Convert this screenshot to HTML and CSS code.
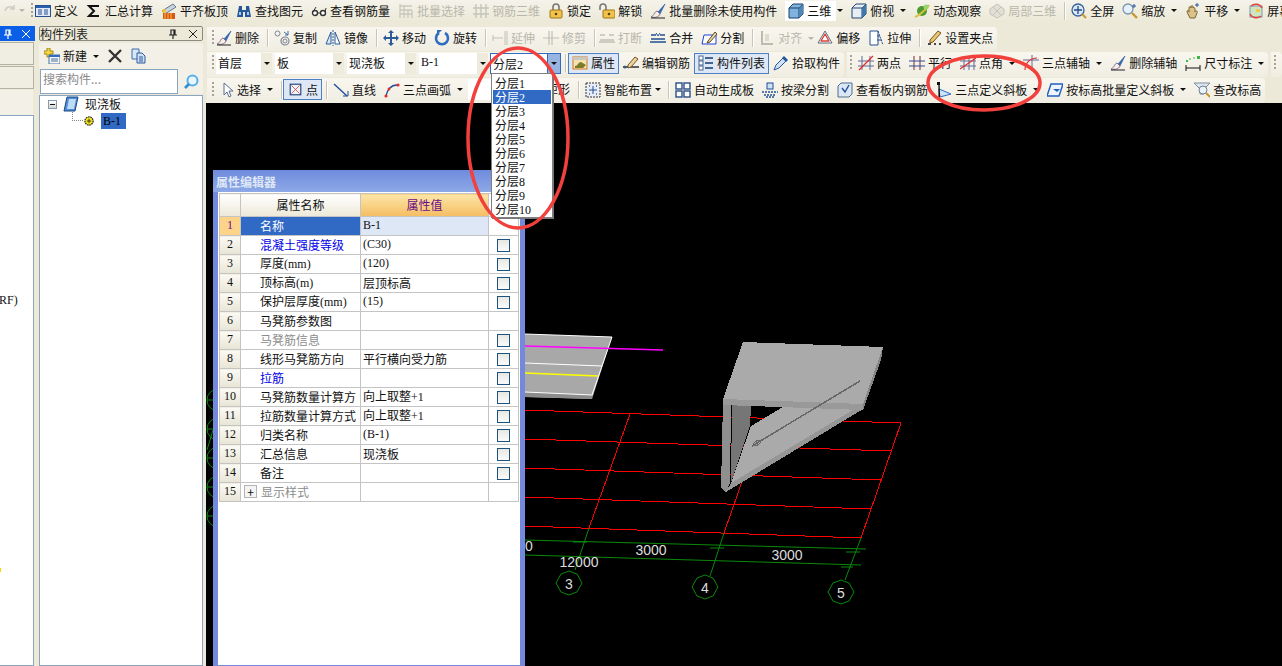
FILE: index.html
```html
<!DOCTYPE html>
<html lang="zh-CN">
<head>
<meta charset="utf-8">
<title>构件列表</title>
<link rel="stylesheet" href="styles.css">
</head>
<body>
<svg class="defs" width="0" height="0" aria-hidden="true">
  <symbol id="i-define" viewBox="0 0 16 16"><rect x=".5" y="2.5" width="15" height="11" fill="#dfe9f7" stroke="#2a4f8f"/><rect x="1" y="3" width="14" height="2" fill="#2a5fb0"/><path d="M3 7h4M3 9h4M3 11h4M9 7h4M9 9h4M9 11h4" stroke="#2a4f8f"/></symbol>
  <symbol id="i-sigma" viewBox="0 0 16 16"><path d="M12 4V3H3l5 5-5 5h9v-1" fill="none" stroke="#111" stroke-width="2"/></symbol>
  <symbol id="i-align" viewBox="0 0 16 16"><path d="M1 8l11-7 3 3L4 11z" fill="#c9d4e0" stroke="#66788c"/><rect x="2" y="10" width="12" height="6" fill="#d8561c"/><path d="M4 10v6M7 10v6M10 10v6" stroke="#f3c23c"/><circle cx="3" cy="8" r="2" fill="#f3c23c"/></symbol>
  <symbol id="i-binoc" viewBox="0 0 16 16"><path d="M3 3h3v4h4V3h3l2 11H9V9H7v5H1z" fill="#27579b"/><path d="M3 9h2v3H3zM11 9h2v3h-2z" fill="#a9c8ee"/></symbol>
  <symbol id="i-glass" viewBox="0 0 16 16"><circle cx="4" cy="10" r="2.5" fill="#fff" stroke="#333" stroke-width="1.4"/><circle cx="12" cy="10" r="2.5" fill="#fff" stroke="#333" stroke-width="1.4"/><path d="M6.5 10h3M2 9l3-5M14 9l1-4" stroke="#333" fill="none"/></symbol>
  <symbol id="i-batch" viewBox="0 0 16 16"><path d="M2 1v14M2 3h12M2 7h12M2 11h12M6 3v12M10 7v8M14 7v8" stroke="#c9c7bd" fill="none" stroke-width="1.3"/></symbol>
  <symbol id="i-rebar" viewBox="0 0 16 16"><path d="M3 1v14M8 1v14M13 1v14M0 5h16M0 11h16" stroke="#c4c3b9" fill="none" stroke-width="1.3"/></symbol>
  <symbol id="i-lock" viewBox="0 0 16 16"><path d="M5 7V4a3 3 0 016 0v3" fill="none" stroke="#777" stroke-width="1.6"/><rect x="2" y="7" width="12" height="8" rx="1" fill="#f2c24a" stroke="#9a7416"/><circle cx="8" cy="11" r="1.3" fill="#5a4208"/></symbol>
  <symbol id="i-unlock" viewBox="0 0 16 16"><path d="M1 7V4a3 3 0 016 0v3" fill="none" stroke="#777" stroke-width="1.6"/><rect x="4" y="7" width="12" height="8" rx="1" fill="#f2c24a" stroke="#9a7416"/><circle cx="10" cy="11" r="1.3" fill="#5a4208"/></symbol>
  <symbol id="i-brush" viewBox="0 0 16 16"><path d="M15 1L8 9l2 2z" fill="#2f6dc2" stroke="#1d4780" stroke-width=".5"/><path d="M7 8c-3 1-2 4-6 6 4 1 8 0 9-3z" fill="#f3efe6" stroke="#8c6a8c"/><path d="M1 15h14" stroke="#222"/></symbol>
  <symbol id="i-cube" viewBox="0 0 16 16"><path d="M1 5l4-4h10v10l-4 4H1z" fill="#7fb2de" stroke="#1d3f66"/><path d="M1 5h10v10M11 5l4-4" fill="none" stroke="#1d3f66"/><path d="M11 5l4-4v10l-4 4z" fill="#4f86b8"/></symbol>
  <symbol id="i-cube2" viewBox="0 0 16 16"><path d="M1 5l4-4h10v10l-4 4H1z" fill="#e7eef6" stroke="#23466e"/><path d="M1 5h10v10M11 5l4-4" fill="none" stroke="#23466e"/><path d="M11 5l4-4v10l-4 4z" fill="#3f78ad"/></symbol>
  <symbol id="i-orbit" viewBox="0 0 16 16"><circle cx="8" cy="8" r="5" fill="#4d9a35"/><path d="M1 14C4 13 12 7 15 2" stroke="#d8c23c" stroke-width="2" fill="none"/><circle cx="12" cy="4" r="2.5" fill="#9bd46a"/></symbol>
  <symbol id="i-local" viewBox="0 0 16 16"><path d="M8 1l7 5v5l-7 4-7-4V6z" fill="#e2e0d6" stroke="#c6c4b9"/><path d="M4 4l8 8M12 4l-8 8" stroke="#c6c4b9"/></symbol>
  <symbol id="i-full" viewBox="0 0 16 16"><circle cx="7" cy="7" r="6" fill="#dce8f7" stroke="#3a6296" stroke-width="1.3"/><path d="M7 3v8M3 7h8" stroke="#1f4b8a" stroke-width="1.3"/><path d="M11 11l4 4" stroke="#c9962d" stroke-width="2"/></symbol>
  <symbol id="i-zoom" viewBox="0 0 16 16"><circle cx="6" cy="6" r="5" fill="#e4f0fb" stroke="#7d95aa" stroke-width="1.3"/><path d="M10 10l5 5" stroke="#c9962d" stroke-width="2.4"/><path d="M12 1v4M10 3h4" stroke="#27579b"/></symbol>
  <symbol id="i-pan" viewBox="0 0 16 16"><path d="M2 9c0-3 2-1 2 0V5c0-2 2-2 2 0V4c0-2 2-2 2 0v1c0-1 2-1 2 1v3c1-2 3-1 2 1l-2 5H5z" fill="#dcc28a" stroke="#7a6433"/><path d="M12 0v4M10 2h4" stroke="#27579b"/></symbol>
  <symbol id="i-screen" viewBox="0 0 16 16"><rect x="2" y="3" width="12" height="11" fill="#cfe4c0" stroke="#7c98b4"/><path d="M3 3a7 7 0 0111 2M13 13a7 7 0 01-11-2" fill="none" stroke="#e0443a" stroke-width="1.5"/><rect x="8" y="6" width="4" height="3" fill="#f0c94a"/></symbol>
  <symbol id="i-copy" viewBox="0 0 16 16"><circle cx="3.5" cy="3.5" r="2.5" fill="none" stroke="#7e8794"/><circle cx="11" cy="11" r="4" fill="none" stroke="#7e8794" stroke-width="1.2"/><circle cx="11" cy="11" r="2" fill="none" stroke="#7e8794"/><path d="M10 2l4 3M14 1v4h-3" stroke="#3b6ca8" fill="none"/></symbol>
  <symbol id="i-mirror" viewBox="0 0 16 16"><path d="M6 2L1 14h5z" fill="#dce8f7" stroke="#2a5c9a"/><path d="M10 2l5 12h-5z" fill="#fff" stroke="#2a5c9a"/><path d="M8 0v16" stroke="#2a5c9a" stroke-dasharray="2 1"/></symbol>
  <symbol id="i-move" viewBox="0 0 16 16"><path d="M8 0l3 3H9v4h4V5l3 3-3 3V9H9v4h2l-3 3-3-3h2V9H3v2L0 8l3-3v2h4V3H5z" fill="#2a5c9a"/></symbol>
  <symbol id="i-rotate" viewBox="0 0 16 16"><path d="M11 3a6 6 0 11-6 0" fill="none" stroke="#2f6dc2" stroke-width="2.6"/><path d="M8 0h-5v5z" fill="#2f6dc2"/></symbol>
  <symbol id="i-extend" viewBox="0 0 16 16"><path d="M13 1v14M15 1v14M1 8h10M1 5v6" stroke="#c2c0b5" fill="none"/></symbol>
  <symbol id="i-trim" viewBox="0 0 16 16"><path d="M6 1v14M9 1v14M0 8h16" stroke="#c2c0b5" fill="none" stroke-width="1.2"/></symbol>
  <symbol id="i-break" viewBox="0 0 16 16"><path d="M1 5h5M10 5h5M0 12h16M1 10h14" stroke="#c2c0b5" fill="none" stroke-width="1.5"/></symbol>
  <symbol id="i-merge" viewBox="0 0 16 16"><path d="M1 5h5M10 5h5M0 12h16M1 9h14" stroke="#23508f" fill="none" stroke-width="1.5"/><path d="M6 3l2 3 2-3" stroke="#23508f" fill="none"/></symbol>
  <symbol id="i-split" viewBox="0 0 16 16"><path d="M3 5h12v9H1z" fill="#fff" stroke="#1f3fd0"/><path d="M7 11l7-9 2 2-7 8-3 1z" fill="#e6d9a6" stroke="#5c4a22"/></symbol>
  <symbol id="i-align2" viewBox="0 0 16 16"><path d="M3 1v14M3 14h11" stroke="#bdbbb0" stroke-width="2"/><rect x="6" y="4" width="4" height="7" fill="#dddbd0"/></symbol>
  <symbol id="i-offset" viewBox="0 0 16 16"><path d="M8 1l7 12H1z" fill="#fff" stroke="#5d6c80" stroke-linejoin="round"/><path d="M8 4l4 7H4z" fill="none" stroke="#d8453a" stroke-linejoin="round" stroke-width="1.4"/></symbol>
  <symbol id="i-stretch" viewBox="0 0 16 16"><path d="M2 1h8v14H2z" fill="#fff" stroke="#2a4f8f"/><path d="M10 1l5 14" stroke="#2a4f8f" stroke-dasharray="2 1"/><path d="M9 6h3M9 10h5" stroke="#2a4f8f"/></symbol>
  <symbol id="i-grip" viewBox="0 0 16 16"><path d="M2 14h3M8 14h2M13 14h2" stroke="#111" stroke-width="1.6"/><path d="M4 10l8-9 3 2-8 9-3 1z" fill="#e7c86e" stroke="#7e4f1b"/></symbol>
  <symbol id="i-attr" viewBox="0 0 16 16"><rect x="1" y="2" width="14" height="12" fill="#f4e3b0" stroke="#d17a1e"/><path d="M1 2h14v3H1z" fill="#c9c7be"/><path d="M3 11c3 0 3-4 6-4l5 3-3 3H3z" fill="#7b7b2a"/></symbol>
  <symbol id="i-edit" viewBox="0 0 16 16"><path d="M0 12h16" stroke="#222" stroke-width="1.4"/><path d="M5 10l7-8 3 2-7 8-3 1z" fill="#e7d7a3" stroke="#7e4f1b"/><circle cx="2" cy="12" r="1.5" fill="#3b5a92"/></symbol>
  <symbol id="i-list" viewBox="0 0 16 16"><rect x="1" y="1" width="4" height="4" fill="#fff" stroke="#47668f"/><rect x="1" y="6" width="4" height="4" fill="#fff" stroke="#47668f"/><rect x="1" y="11" width="4" height="4" fill="#fff" stroke="#47668f"/><path d="M7 3h8M7 8h8M7 13h8" stroke="#47668f" stroke-width="2"/></symbol>
  <symbol id="i-pick" viewBox="0 0 16 16"><path d="M1 15l2-5 7-7 3 3-7 7z" fill="#cfe2f6" stroke="#27579b"/><path d="M9 3l2-2 4 4-2 2z" fill="#27579b"/></symbol>
  <symbol id="i-twopt" viewBox="0 0 16 16"><path d="M4 1v14M12 1v14M0 6h16M0 11h16" stroke="#5d6b96"/><path d="M1 15L15 1" stroke="#e32c2c" stroke-width="1.2"/></symbol>
  <symbol id="i-par" viewBox="0 0 16 16"><path d="M5 1v14M11 1v14" stroke="#7b2c2c"/><path d="M0 6h16M0 11h16" stroke="#2f4f9e"/></symbol>
  <symbol id="i-angle" viewBox="0 0 16 16"><path d="M4 1v14M9 1v14M14 1v14M0 6h16M0 11h16" stroke="#5d6b96"/><path d="M0 14L16 3" stroke="#e32c2c" stroke-width="1.2"/></symbol>
  <symbol id="i-arc3" viewBox="0 0 16 16"><path d="M9 0v16M0 5h16" stroke="#5d6b96"/><path d="M2 15C2 8 7 3 14 3" stroke="#e32c2c" fill="none" stroke-width="1.2"/></symbol>
  <symbol id="i-dim" viewBox="0 0 16 16"><path d="M1 10v6M15 10v6M1 13h14" stroke="#111"/><rect x="1" y="5" width="2" height="2" fill="#3bb54a"/><rect x="12" y="1" width="3" height="3" fill="#3bb54a"/><path d="M4 4h2M8 3h2" stroke="#3bb54a"/></symbol>
  <symbol id="i-cursor" viewBox="0 0 16 16"><path d="M4 1v12l3-3 2 5 2-1-2-5h4z" fill="#fff" stroke="#5b6f96"/></symbol>
  <symbol id="i-point" viewBox="0 0 16 16"><rect x="1.500" y="1.500" width="13" height="13" fill="#eef3fa" stroke="#21437a" stroke-width="1.400"/><path d="M3 3l10 10M13 3L3 13" stroke="#d8453a"/></symbol>
  <symbol id="i-line" viewBox="0 0 16 16"><path d="M1 2l13 12" stroke="#234f9a" stroke-width="1.4"/><path d="M10 14h5V9" fill="none" stroke="#234f9a"/></symbol>
  <symbol id="i-arc" viewBox="0 0 16 16"><path d="M2 14C3 8 7 3 13 3" stroke="#234f9a" fill="none" stroke-width="1.4"/><circle cx="2" cy="14" r="1.6" fill="#e32c2c"/><circle cx="5" cy="7" r="1.4" fill="#e32c2c"/><circle cx="14" cy="3" r="1.6" fill="#e32c2c"/></symbol>
  <symbol id="i-smart" viewBox="0 0 16 16"><rect x="1" y="1" width="14" height="14" fill="#e6edf6" stroke="#333" stroke-dasharray="2 1"/><path d="M8 4v8M4 8h8" stroke="#234f9a"/><path d="M4 4h1M11 4h1M4 12h1M11 12h1" stroke="#111"/></symbol>
  <symbol id="i-auto" viewBox="0 0 16 16"><rect x="1" y="1" width="6" height="6" fill="#fff" stroke="#2b4f86" stroke-width="1.4"/><rect x="9" y="1" width="6" height="6" fill="#fff" stroke="#2b4f86" stroke-width="1.4"/><rect x="1" y="9" width="6" height="6" fill="#fff" stroke="#2b4f86" stroke-width="1.4"/><rect x="9" y="9" width="6" height="6" fill="#fff" stroke="#2b4f86" stroke-width="1.4"/></symbol>
  <symbol id="i-beam" viewBox="0 0 16 16"><rect x="5" y="1" width="6" height="6" fill="#cfe2f6" stroke="#234f9a"/><path d="M0 10h16M2 13h12M4 15h8" stroke="#234f9a" stroke-dasharray="2 1" stroke-width="1.3"/></symbol>
  <symbol id="i-view" viewBox="0 0 16 16"><path d="M4 1h11v11l-3 3H1V4z" fill="#dbe7f4" stroke="#4e6d92"/><path d="M5 6l3 4 4-7" fill="none" stroke="#234f9a" stroke-width="1.4"/></symbol>
  <symbol id="i-tri" viewBox="0 0 16 16"><path d="M3 7l1 8 11-3z" fill="#cfe2f6" stroke="#2f6dc2"/><path d="M3 1v14h1" stroke="#111" stroke-width="1.2"/><rect x="1" y="0" width="3" height="3" fill="#111"/></symbol>
  <symbol id="i-slope" viewBox="0 0 16 16"><path d="M4 2h12l-4 12H0z" fill="#eef5fd" stroke="#1f5fc0" stroke-width="1.4"/><path d="M6 7l4 3 3-3z" fill="#1f5fc0"/></symbol>
  <symbol id="i-query" viewBox="0 0 16 16"><path d="M0 1h16l-6 6v5H6V7z" fill="#dfe6ee" stroke="#7e8ea1"/><circle cx="9" cy="8" r="4" fill="#e8f2fb" stroke="#6e8296"/><path d="M12 11l4 4" stroke="#c9962d" stroke-width="2"/></symbol>
  <symbol id="i-new" viewBox="0 0 16 16"><path d="M3 0h3v3h3v3H6v3H3V6H0V3h3z" fill="#f5d642" stroke="#a38815"/><rect x="5" y="7" width="11" height="9" fill="#f4f7fb" stroke="#4c6d99"/><path d="M5 7h11v2H5z" fill="#2f6dc2"/><path d="M7 11h7M7 13h7" stroke="#4c6d99"/></symbol>
  <symbol id="i-x" viewBox="0 0 16 16"><path d="M2 2l12 12M14 2L2 14" stroke="#333" stroke-width="2.4"/></symbol>
  <symbol id="i-docs" viewBox="0 0 16 16"><path d="M1 1h7v10H1z" fill="#dbe7f7" stroke="#3b6ca8"/><path d="M6 5h5l3 3v7H6z" fill="#cfe0f6" stroke="#2a5c9a"/><path d="M8 9h4M8 11h4M8 13h4" stroke="#2a5c9a"/></symbol>
  <symbol id="i-search" viewBox="0 0 16 16"><circle cx="9.500" cy="6.500" r="5" fill="#eaf6fe" stroke="#55b0e8" stroke-width="2"/><path d="M6 10l-4 4" stroke="#2f8ed4" stroke-width="2.600"/></symbol>
  <symbol id="i-book" viewBox="0 0 16 16"><path d="M4 1h11l-3 14H1z" fill="#4e8fd8" stroke="#1d4780"/><path d="M6 3h7l-2 10H4z" fill="#bcdcf8"/></symbol>
  <symbol id="i-gear" viewBox="0 0 16 16"><circle cx="8" cy="8" r="5.500" fill="#f2e323" stroke="#111" stroke-dasharray="2 1" stroke-width="1.500"/><path d="M5 8h6M8 5v6" stroke="#111"/></symbol>
  <symbol id="i-pin" viewBox="0 0 10 10"><path d="M3 1h4v5H3zM1 6h8M5 6v4M6 1v5" fill="none" stroke="currentColor" stroke-width="1.200"/></symbol>
  <symbol id="i-close" viewBox="0 0 10 10"><path d="M1 1l8 8M9 1L1 9" stroke="currentColor"/></symbol>
  <symbol id="i-undo" viewBox="0 0 16 16"><path d="M3 8a5 5 0 019-2M12 2v4H8" fill="none" stroke="#cfcdc3" stroke-width="1.500"/></symbol>
</svg>

<div class="app">
  <header class="topbar">
    <div class="quick"><svg class="ico"><use href="#i-undo"/></svg><span class="arr off"></span></div>
    <span class="grip"></span>
    <div class="tools">
      <div class="tool"><svg class="ico"><use href="#i-define"/></svg>定义</div>
      <div class="tool"><svg class="ico"><use href="#i-sigma"/></svg>汇总计算</div>
      <div class="tool"><svg class="ico"><use href="#i-align"/></svg>平齐板顶</div>
      <div class="tool"><svg class="ico"><use href="#i-binoc"/></svg>查找图元</div>
      <div class="tool"><svg class="ico"><use href="#i-glass"/></svg>查看钢筋量</div>
      <div class="tool off"><svg class="ico"><use href="#i-batch"/></svg>批量选择</div>
      <div class="tool off"><svg class="ico"><use href="#i-rebar"/></svg>钢筋三维</div>
      <div class="tool"><svg class="ico"><use href="#i-lock"/></svg>锁定</div>
      <div class="tool"><svg class="ico"><use href="#i-unlock"/></svg>解锁</div>
      <div class="tool"><svg class="ico"><use href="#i-brush"/></svg>批量删除未使用构件</div>
      <div class="tool boxed"><svg class="ico"><use href="#i-cube"/></svg>三维<span class="arr"></span></div>
      <div class="tool"><svg class="ico"><use href="#i-cube2"/></svg>俯视<span class="arr"></span></div>
      <div class="tool"><svg class="ico"><use href="#i-orbit"/></svg>动态观察</div>
      <div class="tool off"><svg class="ico"><use href="#i-local"/></svg>局部三维</div>
      <span class="sep"></span>
      <div class="tool"><svg class="ico"><use href="#i-full"/></svg>全屏</div>
      <div class="tool"><svg class="ico"><use href="#i-zoom"/></svg>缩放<span class="arr"></span></div>
      <div class="tool"><svg class="ico"><use href="#i-pan"/></svg>平移<span class="arr"></span></div>
      <div class="tool"><svg class="ico"><use href="#i-screen"/></svg>屏幕</div>
    </div>
  </header>

  <div class="workspace">
    <aside class="dock">
      <div class="dock-title"><svg class="mini"><use href="#i-pin"/></svg><svg class="mini"><use href="#i-close"/></svg></div>
      <div class="dock-btn"></div>
      <div class="dock-btn"></div>
      <div class="dock-strip"></div>
      <div class="dock-body"><span class="clip lat">(RF)</span><span class="mark"></span></div>
    </aside>

    <aside class="panel">
      <div class="panel-title"><span>构件列表</span><svg class="mini"><use href="#i-pin"/></svg><svg class="mini"><use href="#i-close"/></svg></div>
      <div class="panel-tools">
        <div class="tool"><svg class="ico"><use href="#i-new"/></svg>新建<span class="arr"></span></div>
        <svg class="ico"><use href="#i-x"/></svg>
        <svg class="ico"><use href="#i-docs"/></svg>
      </div>
      <div class="search">
        <div class="search-input">搜索构件...</div>
        <div class="search-btn"><svg class="ico"><use href="#i-search"/></svg></div>
      </div>
      <div class="tree">
        <div class="tree-root"><span class="expander"></span><svg class="ico"><use href="#i-book"/></svg>现浇板</div>
        <div class="tree-leaf"><span class="dots"></span><svg class="ico small"><use href="#i-gear"/></svg><span class="leaf-label lat">B-1</span></div>
      </div>
    </aside>

    <main class="main">
      <div class="row row2">
        <div class="bar">
          <span class="grip"></span>
          <div class="tool"><svg class="ico"><use href="#i-brush"/></svg>删除</div>
          <span class="sep"></span>
          <div class="tool"><svg class="ico"><use href="#i-copy"/></svg>复制</div>
          <div class="tool"><svg class="ico"><use href="#i-mirror"/></svg>镜像</div>
          <span class="sep"></span>
          <div class="tool"><svg class="ico"><use href="#i-move"/></svg>移动</div>
          <div class="tool"><svg class="ico"><use href="#i-rotate"/></svg>旋转</div>
          <span class="sep"></span>
          <div class="tool off"><svg class="ico"><use href="#i-extend"/></svg>延伸</div>
          <div class="tool off"><svg class="ico"><use href="#i-trim"/></svg>修剪</div>
          <span class="sep"></span>
          <div class="tool off tight"><svg class="ico"><use href="#i-break"/></svg>打断</div>
          <div class="tool"><svg class="ico"><use href="#i-merge"/></svg>合并</div>
          <div class="tool"><svg class="ico"><use href="#i-split"/></svg>分割</div>
          <span class="sep"></span>
          <div class="tool off"><svg class="ico"><use href="#i-align2"/></svg>对齐<span class="arr off near"></span></div>
          <div class="tool"><svg class="ico"><use href="#i-offset"/></svg>偏移</div>
          <div class="tool"><svg class="ico"><use href="#i-stretch"/></svg>拉伸</div>
          <span class="sep"></span>
          <div class="tool"><svg class="ico"><use href="#i-grip"/></svg>设置夹点</div>
        </div>
      </div>

      <div class="row row3">
        <div class="bar bar-a">
          <span class="grip"></span>
          <div class="combo c-floor"><span class="combo-text">首层</span><span class="combo-btn"><span class="arr"></span></span></div>
          <div class="combo c-mid"><span class="combo-text">板</span><span class="combo-btn"><span class="arr"></span></span></div>
          <div class="combo c-mid"><span class="combo-text">现浇板</span><span class="combo-btn"><span class="arr"></span></span></div>
          <div class="combo c-mid"><span class="combo-text lat">B-1</span><span class="combo-btn"><span class="arr"></span></span></div>
          <div class="combo c-open"><span class="combo-text">分层<span class="lat">2</span></span><span class="combo-btn"><span class="arr"></span></span></div>
          <span class="sep"></span>
          <div class="tool boxed-blue"><svg class="ico"><use href="#i-attr"/></svg>属性</div>
          <div class="tool"><svg class="ico"><use href="#i-edit"/></svg>编辑钢筋</div>
          <div class="tool boxed-blue"><svg class="ico"><use href="#i-list"/></svg>构件列表</div>
          <div class="tool"><svg class="ico"><use href="#i-pick"/></svg>拾取构件</div>
        </div>
        <div class="bar bar-b">
          <span class="grip"></span>
          <div class="tool"><svg class="ico"><use href="#i-twopt"/></svg>两点</div>
          <div class="tool"><svg class="ico"><use href="#i-par"/></svg>平行</div>
          <div class="tool"><svg class="ico"><use href="#i-angle"/></svg>点角<span class="arr"></span></div>
          <div class="tool"><svg class="ico"><use href="#i-arc3"/></svg>三点辅轴<span class="arr"></span></div>
          <div class="tool"><svg class="ico"><use href="#i-brush"/></svg>删除辅轴</div>
          <div class="tool"><svg class="ico"><use href="#i-dim"/></svg>尺寸标注<span class="arr"></span></div>
        </div>
        <div class="bar bar-c"><span class="grip"></span></div>
      </div>

      <div class="row row4">
        <div class="bar">
          <span class="grip"></span>
          <div class="tool select"><svg class="ico"><use href="#i-cursor"/></svg>选择<span class="arr"></span></div>
          <span class="sep"></span>
          <div class="tool boxed-blue point"><svg class="ico"><use href="#i-point"/></svg>点</div>
          <span class="sep"></span>
          <div class="tool"><svg class="ico"><use href="#i-line"/></svg>直线</div>
          <div class="tool"><svg class="ico"><use href="#i-arc"/></svg>三点画弧<span class="arr"></span></div>
          <div class="rect-field">矩形</div>
          <span class="sep"></span>
          <div class="tool"><svg class="ico"><use href="#i-smart"/></svg>智能布置<span class="arr near2"></span></div>
          <span class="sep"></span>
          <div class="tool"><svg class="ico"><use href="#i-auto"/></svg>自动生成板</div>
          <div class="tool"><svg class="ico"><use href="#i-beam"/></svg>按梁分割</div>
          <div class="tool"><svg class="ico"><use href="#i-view"/></svg>查看板内钢筋</div>
          <div class="tool"><svg class="ico"><use href="#i-tri"/></svg>三点定义斜板<span class="arr"></span></div>
          <div class="tool"><svg class="ico"><use href="#i-slope"/></svg>按标高批量定义斜板<span class="arr"></span></div>
          <div class="tool"><svg class="ico"><use href="#i-query"/></svg>查改标高</div>
        </div>
      </div>

      <div class="canvas">
        <svg class="scene" viewBox="206 103 1076 563" width="1076" height="563">
          <g fill="none" stroke="#0a8a0a">
            <circle cx="218" cy="400" r="11"/><circle cx="218" cy="429" r="11"/><circle cx="218" cy="458" r="11"/><circle cx="218" cy="487" r="11"/><circle cx="218" cy="516" r="11"/>
            <path d="M207 400h8M207 429h8M207 458h8M207 487h8M207 516h8M207 450l6-20"/>
          </g>
          <path d="M525 334L612 337L592 399L525 397Z" fill="#a8a8a8"/>
          <path d="M525 397L592 399L592 395L525 392Z" fill="#8c8c8c"/>
          <g fill="none" stroke="#fff">
            <path d="M525 334L612 337L592 395L525 392M525 363L602 366"/>
          </g>
          <path d="M525 346L663 350" stroke="#f0f" stroke-width="1.500"/>
          <path d="M525 373L598 376" stroke="#ff0" stroke-width="1.500"/>
          <g class="crisp" fill="none" stroke="#f00">
            <path d="M525 410L901 423M525 439L891 451M525 468L881 480M525 497L871 509M525 526L861 538"/>
            <path d="M630 414L589 528M760 430L724 533M901 423L861 538"/>
          </g>
          <g fill="none" stroke="#0a8a0a">
            <path d="M525 540L866 549M525 555L861 565"/>
            <path d="M589 528L575 570M724 533L710 576M861 538L845 580"/>
            <path d="M573 542h14M710 548h14M846 552h14M841 567h12"/>
            <polygon points="569,571 577,574 582,583 577,592 569,595 561,592 556,583 561,574"/>
            <polygon points="705,575 713,578 718,587 713,596 705,599 697,596 692,587 697,578"/>
            <polygon points="841,580 849,583 854,592 849,601 841,604 833,601 828,592 833,583"/>
          </g>
          <g class="scene-text">
            <text x="525" y="551">0</text>
            <text x="651" y="555" text-anchor="middle">3000</text>
            <text x="787" y="560" text-anchor="middle">3000</text>
            <text x="579" y="567" text-anchor="middle">12000</text>
            <text x="569" y="589" text-anchor="middle">3</text>
            <text x="705" y="593" text-anchor="middle">4</text>
            <text x="841" y="598" text-anchor="middle">5</text>
          </g>
          <g class="crisp">
            <path d="M723 400L731 405L730 483L726 492L721 488Z" fill="#8f8f8f"/>
            <path d="M732 405L751 406L750 426L731 483Z" fill="#767676"/>
            <path d="M751 426L783 407L863 409L731 483Z" fill="#aaa"/>
            <path d="M863 409L726 492L731 483L853 410Z" fill="#969696"/>
            <path d="M743 342L883 347L863 404L723 399Z" fill="#aaa"/>
            <path d="M883 347L881 360L863 410L863 404Z" fill="#868686"/>
            <path d="M723 399L863 404L863 410L751 406L723 405Z" fill="#999"/>
            <path d="M752 446L860 381" stroke="#666" stroke-width="1.500"/>
            <ellipse cx="757" cy="443" rx="4" ry="2" transform="rotate(-30 757 443)" fill="none" stroke="#666"/>
          </g>
        </svg>

        <section class="prop-window">
          <h2 class="prop-title">属性编辑器</h2>
          <table class="prop-table">
            <colgroup><col class="col-n"><col class="col-name"><col class="col-val"><col class="col-chk"></colgroup>
            <thead>
              <tr><th class="corner"></th><th class="head-name">属性名称</th><th class="head-val">属性值</th><th class="head-chk"></th></tr>
            </thead>
            <tbody>
              <tr><td class="num num-on lat">1</td><td class="name name-on">名称</td><td class="val val-on lat">B-1</td><td></td></tr>
              <tr><td class="num lat">2</td><td class="name link">混凝土强度等级</td><td class="val lat">(C30)</td><td class="chk"><span class="box"></span></td></tr>
              <tr><td class="num lat">3</td><td class="name">厚度<span class="lat">(mm)</span></td><td class="val lat">(120)</td><td class="chk"><span class="box"></span></td></tr>
              <tr><td class="num lat">4</td><td class="name">顶标高<span class="lat">(m)</span></td><td class="val">层顶标高</td><td class="chk"><span class="box"></span></td></tr>
              <tr><td class="num lat">5</td><td class="name">保护层厚度<span class="lat">(mm)</span></td><td class="val lat">(15)</td><td class="chk"><span class="box"></span></td></tr>
              <tr><td class="num lat">6</td><td class="name">马凳筋参数图</td><td class="val"></td><td></td></tr>
              <tr><td class="num lat">7</td><td class="name dim">马凳筋信息</td><td class="val"></td><td class="chk"><span class="box"></span></td></tr>
              <tr><td class="num lat">8</td><td class="name">线形马凳筋方向</td><td class="val">平行横向受力筋</td><td class="chk"><span class="box"></span></td></tr>
              <tr><td class="num lat">9</td><td class="name link">拉筋</td><td class="val"></td><td class="chk"><span class="box"></span></td></tr>
              <tr><td class="num lat">10</td><td class="name">马凳筋数量计算方</td><td class="val">向上取整<span class="lat">+1</span></td><td class="chk"><span class="box"></span></td></tr>
              <tr><td class="num lat">11</td><td class="name">拉筋数量计算方式</td><td class="val">向上取整<span class="lat">+1</span></td><td class="chk"><span class="box"></span></td></tr>
              <tr><td class="num lat">12</td><td class="name">归类名称</td><td class="val lat">(B-1)</td><td class="chk"><span class="box"></span></td></tr>
              <tr><td class="num lat">13</td><td class="name">汇总信息</td><td class="val">现浇板</td><td class="chk"><span class="box"></span></td></tr>
              <tr><td class="num lat">14</td><td class="name">备注</td><td class="val"></td><td class="chk"><span class="box"></span></td></tr>
              <tr><td class="num lat">15</td><td class="name name-group dim"><span class="plus">+</span>显示样式</td><td class="val"></td><td></td></tr>
            </tbody>
          </table>
        </section>
      </div>

      <ul class="dropdown">
        <li>分层<span class="lat">1</span></li>
        <li class="picked">分层<span class="lat">2</span></li>
        <li>分层<span class="lat">3</span></li>
        <li>分层<span class="lat">4</span></li>
        <li>分层<span class="lat">5</span></li>
        <li>分层<span class="lat">6</span></li>
        <li>分层<span class="lat">7</span></li>
        <li>分层<span class="lat">8</span></li>
        <li>分层<span class="lat">9</span></li>
        <li>分层<span class="lat">10</span></li>
      </ul>
    </main>
  </div>

  <svg class="annot" viewBox="0 0 1282 666" width="1282" height="666" aria-hidden="true">
    <ellipse cx="518" cy="138" rx="50" ry="90"/>
    <ellipse cx="984" cy="83" rx="56" ry="27"/>
  </svg>
</div>
</body>
</html>
```

FILE: styles.css
```css
* { box-sizing: border-box; }
html, body { margin: 0; height: 100%; }
body {
  overflow: hidden;
  background: #ece9d8;
  color: #111;
  font: 12px/16px "Noto Sans CJK SC", "Liberation Sans", sans-serif;
}
.defs { position: absolute; }
.app { position: relative; width: 1282px; height: 666px; display: flex; flex-direction: column; overflow: hidden; }
.lat { font-family: "Liberation Serif", serif; font-size: 12px; }

.ico { width: 16px; height: 16px; flex: none; display: block; }
.ico.small { width: 12px; height: 12px; }
.mini { width: 10px; height: 10px; flex: none; display: block; }
.arr { display: inline-block; width: 0; height: 0; margin-left: 3px; border: 3px solid transparent; border-top: 3px solid #111; border-bottom: 0; flex: none; }
.arr.off { border-top-color: #b8b6ab; }
.arr.near { margin-right: -5px; }
.arr.near2 { margin-left: 0; margin-right: -1px; }
.tool { display: flex; align-items: center; gap: 3px; white-space: nowrap; flex: none; }
.tool.off { color: #b9b7ac; }
.tool.tight { margin-left: -2px; }
.sep { width: 1px; height: 18px; margin-right: -2px; background: #c9c6b8; box-shadow: 1px 0 #fff; flex: none; }
.grip { width: 2px; height: 16px; flex: none; margin-right: -6px; background: repeating-linear-gradient(#a7a497 0 2px, transparent 2px 4px); }

.topbar { height: 21px; display: flex; align-items: center; background: linear-gradient(#f5f3ea, #ece9d8); flex: none; overflow: hidden; }
.quick { width: 31px; flex: none; display: flex; align-items: center; padding-left: 2px; }
.quick .arr { margin-left: 1px; }
.topbar > .grip { margin-right: 0; }
.tools { display: flex; flex: none; align-items: center; gap: 8px; margin-left: 2px; }
.boxed { padding-left: 3px; height: 20px; background: linear-gradient(90deg, #fff 51px, transparent 51px); }

.workspace { flex: 1; display: flex; min-height: 0; }

.dock { width: 35px; flex: none; padding-top: 5px; display: flex; flex-direction: column; }
.dock-title { height: 15px; background: #0a5fe6; color: #fff; display: flex; align-items: center; justify-content: space-between; padding: 0 4px 0 3px; flex: none; }
.dock-btn { height: 23px; width: 34px; flex: none; background: #f0eee2; border: 1px solid #b4b2a5; border-left: 0; margin-top: 1px; }
.dock-strip { height: 25px; width: 33px; flex: none; background: #f3f1e7; margin-top: 1px; }
.dock-body { flex: 1; width: 34px; background: #fff; border: 1px solid #8aa5c0; border-left: 0; position: relative; }
.clip { position: absolute; left: -5px; top: 176px; white-space: nowrap; }
.mark { position: absolute; left: 0; top: 452px; width: 1px; height: 4px; background: #ffd400; }

.panel { width: 164px; margin-left: 4px; padding-top: 5px; flex: none; display: flex; flex-direction: column; }
.panel-title { height: 15px; display: flex; align-items: center; gap: 10px; border: 1px solid #8b8a80; border-radius: 2px; background: #ece9d8; padding-right: 4px; flex: none; font-size: 12px; color: #222; }
.panel-title span { flex: 1; }
.panel-tools { height: 26px; margin-top: 2px; display: flex; align-items: center; padding-left: 5px; gap: 8px; background: #f3f1e7; flex: none; border-radius: 3px; }
.search { height: 25px; display: flex; flex: none; }
.search-input { width: 138px; margin-left: 1px; border: 1px solid #8aa5c0; background: #fff; color: #8a8a8a; padding: 1px 2px 3px; }
.search-btn { flex: 1; display: flex; align-items: center; justify-content: center; background: #f3f1e7; }
.tree { flex: 1; margin-top: 1px; background: #fff; border: 1px solid #8aa5c0; }
.tree-root { display: flex; align-items: center; height: 16px; padding-left: 8px; gap: 6px; }
.expander { width: 9px; height: 9px; border: 1px solid #7f9db9; background: linear-gradient(#fff, #d8d5c8); position: relative; }
.expander::after { content: ""; position: absolute; left: 1px; top: 3px; width: 5px; height: 1px; background: #111; }
.tree-leaf { display: flex; align-items: center; height: 17px; padding-left: 32px; }
.dots { width: 11px; height: 9px; margin-top: -8px; border-left: 1px dotted #888; border-bottom: 1px dotted #888; }
.leaf-label { margin-left: 6px; width: 25px; height: 16px; line-height: 16px; padding-left: 2px; background: #316ac5; color: #000; }

.main { width: 1076px; flex: none; margin-left: 3px; padding-top: 6px; display: flex; flex-direction: column; position: relative; }
.row { display: flex; flex: none; }
.row2 { height: 24px; }
.row3 { height: 25px; margin-top: 1px; gap: 3px; }
.row4 { height: 25px; margin-top: 1px; }
.bar { display: flex; align-items: center; gap: 8px; padding: 0 4px 2px 5px; margin-left: 1px; background: linear-gradient(#f8f6ee, #f0eee2); border-radius: 0 4px 4px 0; flex: none; }
.row3 .bar { padding-bottom: 3px; }
.bar-b { margin-left: 0; padding-left: 3px !important; }
.bar-b .grip { margin-right: -2px; }
.bar-c { flex: 1; margin-left: 0; padding-left: 3px !important; }

.combo { display: flex; height: 21px; flex: none; }
.combo-text { flex: 1; background: #fff; padding: 1px 2px; line-height: 17px; }
.combo-btn { width: 11px; display: flex; align-items: center; justify-content: center; background: #eeebdd; }
.combo-btn .arr { margin: 0; }
.c-floor { width: 56px; margin-right: -5px; }
.c-mid { width: 69px; margin-right: -5px; }
.c-open { width: 71px; border: 1px solid #316ac5; margin-left: -1px; margin-right: -4px; }
.c-open .combo-btn { width: 13px; background: #98b5e2; border-left: 1px solid #316ac5; }
.boxed-blue { border: 1px solid #4d7fc4; background: #dee7f5; height: 21px; padding: 0 3px; margin: 0 -4px; }
.select { margin-left: 4px; }
.select .ico { margin-right: -2px; }
.point { gap: 4px; padding: 0 3px 0 5px; margin: 0 -4px 0 -5px; }
.point .ico { width: 13px; height: 13px; }
.rect-field { width: 102px; height: 21px; text-align: right; line-height: 19px; margin-left: -3px; flex: none; background: linear-gradient(90deg, #fff 30px, transparent 30px); }

.canvas { flex: 1; position: relative; background: #000; overflow: hidden; }
.scene { display: block; }
.crisp { shape-rendering: crispEdges; }
.scene-text text { fill: #ddd; font: 14px "Liberation Sans", sans-serif; }

.prop-window { position: absolute; left: 7px; top: 67px; width: 312px; height: 500px; background: #fff; border: 5px solid #7389dc; border-top: 0; border-radius: 3px 3px 0 0; }
.prop-title { margin: 0 -5px; height: 22px; padding: 4px 0 0 3px; background: linear-gradient(#6f8bdd, #8ea9e6); color: #dfe7f7; font-size: 12px; font-weight: 700; line-height: 16px; }
.prop-table { border-collapse: collapse; table-layout: fixed; width: 299px; margin: 1px 0 0 1px; line-height: 13px; }
.col-n { width: 21px; } .col-name { width: 120px; } .col-val { width: 128px; } .col-chk { width: 30px; }
.prop-table th { height: 23px; padding: 0 0 2px; border: 1px solid #c4c4c4; font-weight: 400; background: linear-gradient(#fff, #ece9d8); text-align: center; }
.prop-table .head-val { background: linear-gradient(#fce6a8, #f5bd62); color: #6a0a8a; }
.prop-table .head-chk { background: #fff; }
.prop-table td { height: 19px; padding: 0 0 2px; border: 1px solid #c4c4c4; white-space: nowrap; overflow: hidden; }
.prop-table tbody tr { height: 19px; }
.num { text-align: center; background: linear-gradient(#fbfaf4, #e8e5d6); }
.prop-table .num-on { background: #fdd38a; color: #6a0a8a; }
.prop-table .name { padding-left: 19px; }
.prop-table .name-on { background: #316ac5; color: #fff; }
.prop-table .val { padding-left: 2px; }
.prop-table .val-on { background: #dde7f5; }
.prop-table .link { color: #0000e6; }
.prop-table .dim { color: #8c8c8c; }
.prop-table .chk { text-align: center; line-height: 0; padding: 0; }
.box { display: block; width: 13px; height: 13px; margin: 0 auto; border: 1px solid #1c5180; background: linear-gradient(#e8e8e2, #fafafa); }
.prop-table .name-group { padding-left: 3px; }
.plus { display: inline-block; width: 13px; height: 13px; margin-right: 4px; border: 1px solid #b4b4b4; background: #f4f4f4; color: #111; text-align: center; line-height: 11px; vertical-align: top; }

.dropdown { position: absolute; left: 285px; top: 52px; width: 62px; height: 145px; margin: 0; padding: 2px 1px 0; list-style: none; background: #fff; border: 1px solid #808080; box-shadow: 1px 1px #777; z-index: 3; }
.dropdown li { height: 14px; line-height: 13px; padding-left: 2px; }
.dropdown .picked { background: #316ac5; color: #fff; }

.annot { position: absolute; left: 0; top: 0; z-index: 5; pointer-events: none; }
.annot ellipse { fill: none; stroke: #f2403c; stroke-width: 3.5; }
```
